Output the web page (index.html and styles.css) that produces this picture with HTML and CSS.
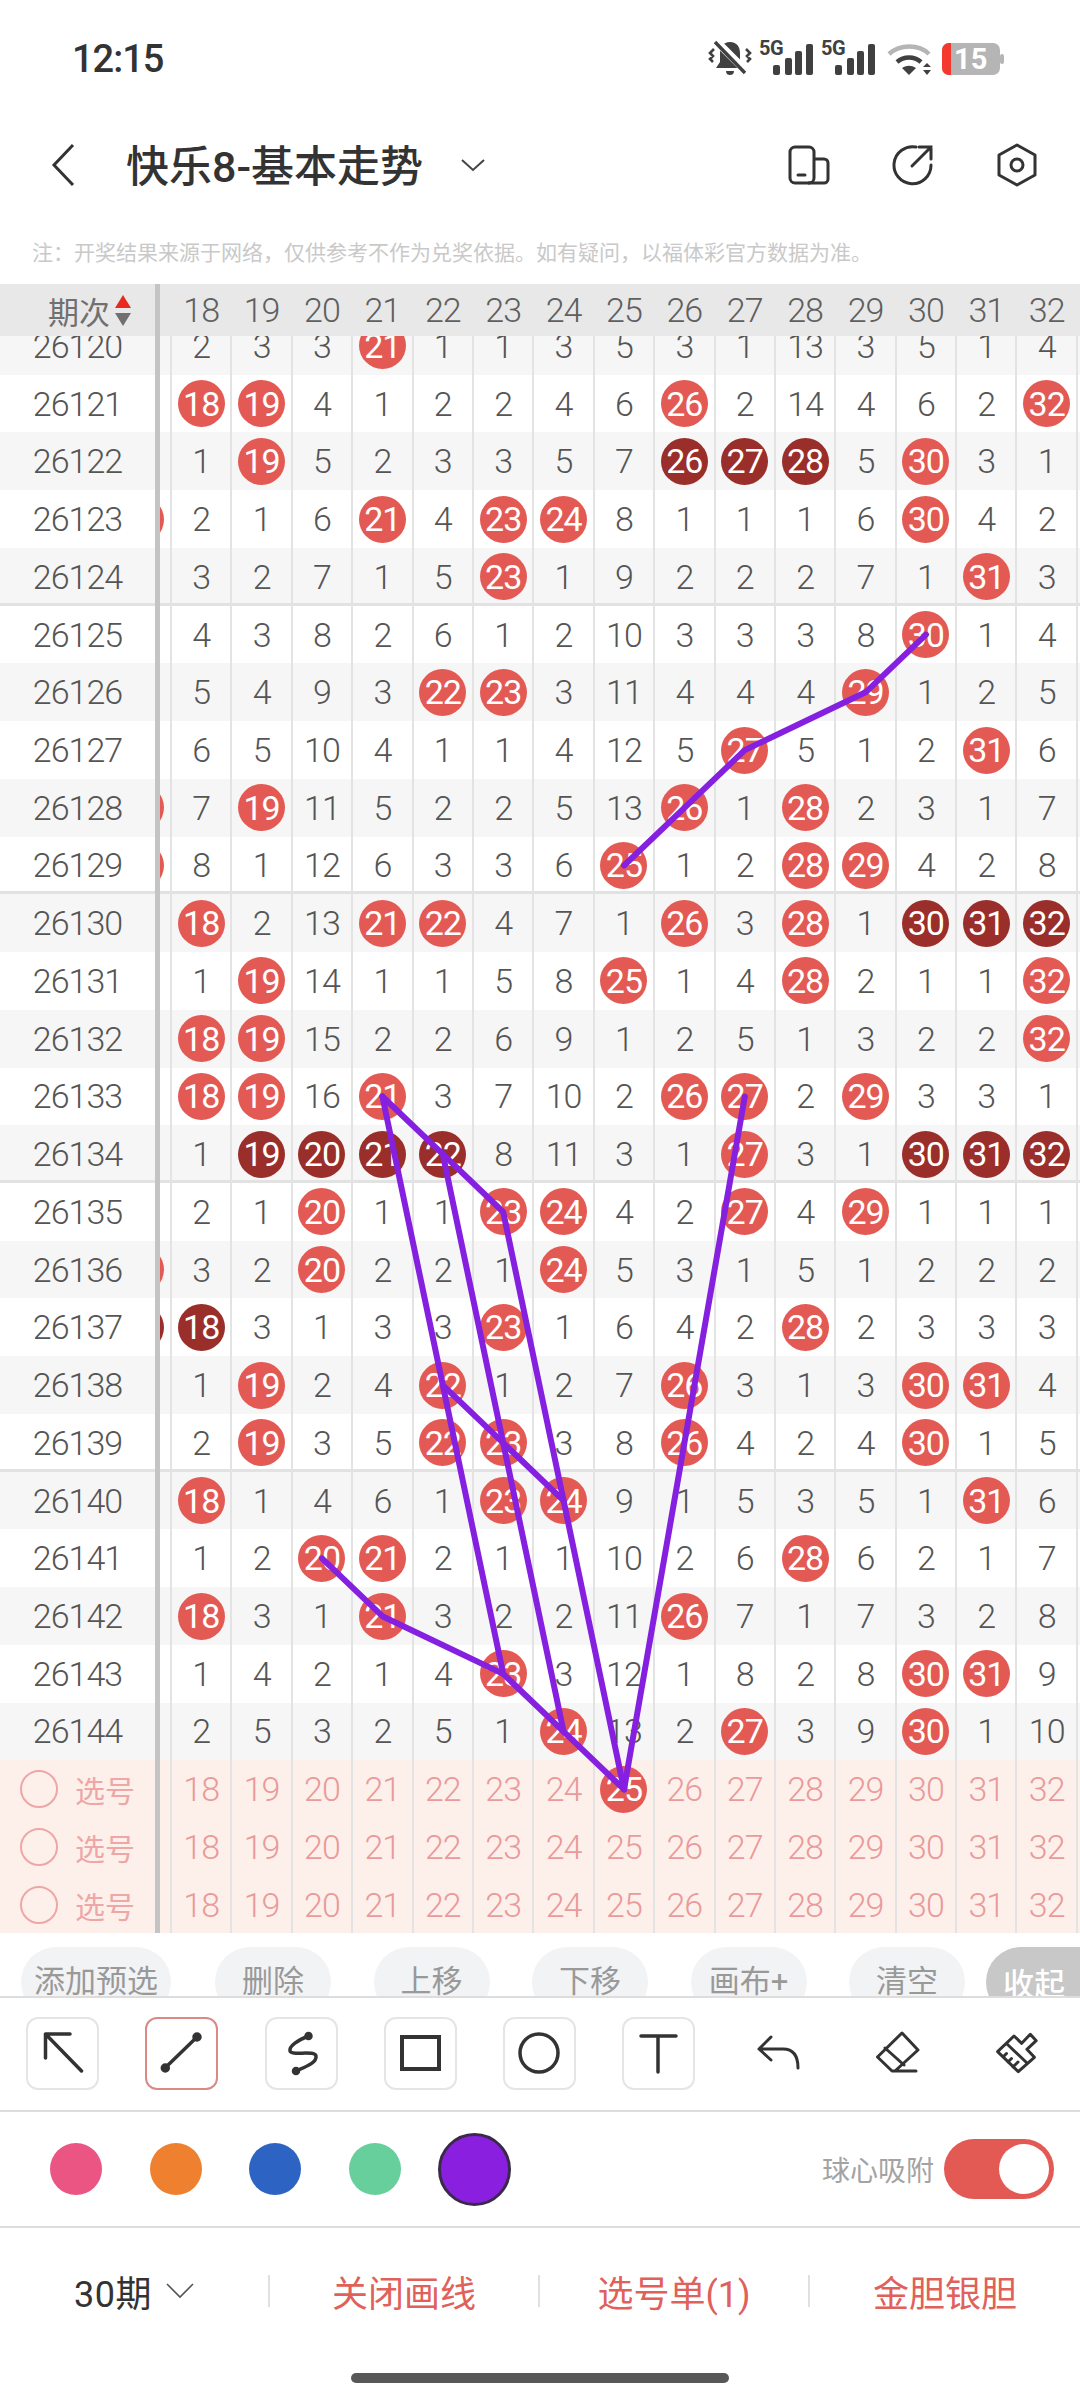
FILE: index.html
```html
<!DOCTYPE html>
<html lang="zh-CN">
<head>
    <meta charset="UTF-8">
    <meta name="viewport" content="width=device-width, initial-scale=1.0">
    <title>快乐8-基本走势</title>
    <link rel="stylesheet" href="styles.css">
</head>
<body>
    <!-- Status bar -->
    <div class="status-bar">
        <span class="status-time">12:15</span>
        <svg class="status-icons" width="300" height="44" viewBox="705 34 300 44">
            <g fill="#404040">
                <path d="M728 40c-7 0-10 5-10 11v9l-4 6h28l-4-6v-9c0-6-3-11-10-11zM724 69h8c0 3-2 4-4 4s-4-1-4-4z"/>
                <path d="M712 47l-4 4 3 3-3 3 3 3M744 47l4 4-3 3 3 3-3 3" fill="none" stroke="#404040" stroke-width="2.6"/>
            </g>
            <path d="M713 38l33 33" stroke="#fff" stroke-width="8"/>
            <path d="M713 40l30 31" stroke="#404040" stroke-width="3.4"/>
            <text class="status-net" x="757" y="53">5G</text>
            <g fill="#404040">
                <rect x="771" y="63" width="7" height="10" rx="2"/><rect x="783" y="56" width="7" height="17" rx="2"/>
                <rect x="793" y="49" width="7" height="24" rx="2"/><rect x="804" y="42" width="7" height="31" rx="2"/>
            </g>
            <text class="status-net" x="819" y="53">5G</text>
            <g fill="#404040">
                <rect x="833" y="63" width="7" height="10" rx="2"/><rect x="845" y="56" width="7" height="17" rx="2"/>
                <rect x="855" y="49" width="7" height="24" rx="2"/><rect x="866" y="42" width="7" height="31" rx="2"/>
            </g>
            <path d="M887 52c11-10 30-10 40 0" fill="none" stroke="#b5b5b5" stroke-width="4.5"/>
            <path d="M895 60c7-6 17-6 24 0" fill="none" stroke="#404040" stroke-width="4.5"/>
            <path d="M900 66c5-3 9-3 14 0l-7 7z" fill="#404040"/>
            <path d="M921 65l4-4 4 4zM921 68h8l-4 5z" fill="#404040"/>
            <rect x="940" y="41" width="58" height="32" rx="7" fill="#b5b5b5"/>
            <rect x="998" y="52" width="4" height="10" rx="2" fill="#b5b5b5"/>
            <path d="M947 41h2v32h-2a7 7 0 0 1-7-7V48a7 7 0 0 1 7-7z" fill="#f5382e"/>
            <text class="status-level" x="952" y="67">15</text>
        </svg>
    </div>

    <!-- Title bar -->
    <div class="title-bar">
        <svg class="back-icon" width="24" height="44" viewBox="0 0 24 44"><path d="M22 2L3 22l19 20" fill="none" stroke="#333" stroke-width="3"/></svg>
        <span class="title-text">快乐8-基本走势</span>
        <svg class="title-caret" width="26" height="14" viewBox="0 0 26 14"><path d="M2 2l11 10L24 2" fill="none" stroke="#444" stroke-width="2"/></svg>
        <div class="title-actions">
            <svg width="42" height="40" viewBox="0 0 42 40" fill="none" stroke="#333" stroke-width="3">
                <rect x="2" y="2" width="24" height="36" rx="5"/>
                <path d="M26 14h10a4 4 0 0 1 4 4v16a4 4 0 0 1-4 4H20"/>
                <path d="M10 30h7" stroke-linecap="round"/>
            </svg>
            <svg width="42" height="42" viewBox="0 0 42 42" fill="none" stroke="#333" stroke-width="3" stroke-linecap="round">
                <path d="M24 3A18.5 18.5 0 1 0 39 21"/>
                <path d="M27 3h12v12M39 3L20 22"/>
            </svg>
            <svg width="42" height="44" viewBox="0 0 42 44" fill="none" stroke="#333" stroke-width="3" stroke-linejoin="round">
                <path d="M21 2l18 10v20L21 42 3 32V12z"/>
                <circle cx="21" cy="22" r="6"/>
            </svg>
        </div>
    </div>

    <p class="note">注：开奖结果来源于网络，仅供参考不作为兑奖依据。如有疑问，以福体彩官方数据为准。</p>

    <!-- Trend table, filled in by app.js -->
    <div class="trend" id="trend">
        <div class="trend-row trend-head" id="trendHead"></div>
        <div class="trend-body" id="trendBody"></div>
        <svg class="draw-layer" id="drawLayer" width="1080" height="1649"></svg>
    </div>

    <!-- Action pills, cut off by the panel below -->
    <div class="pill-bar">
        <span class="pill pill-wide">添加预选</span>
        <span class="pill">删除</span>
        <span class="pill">上移</span>
        <span class="pill">下移</span>
        <span class="pill">画布+</span>
        <span class="pill">清空</span>
        <span class="pill pill-fold">收起</span>
    </div>

    <!-- Drawing tools -->
    <div class="tool-bar">
        <div class="tool tool-box">
            <svg width="73" height="73" viewBox="0 0 73 73" class="tool-icon"><path d="M19.5 41V17H44M19.5 17l36 37"/></svg>
        </div>
        <div class="tool tool-box tool-active">
            <svg width="73" height="73" viewBox="0 0 73 73" class="tool-icon"><path d="M20 51l32-31"/><circle class="dot" cx="20.3" cy="51" r="3"/><circle class="dot" cx="52" cy="20" r="3"/></svg>
        </div>
        <div class="tool tool-box">
            <svg width="73" height="73" viewBox="0 0 73 73" class="tool-icon"><path d="M43.5 19C33 23 24 29 25 34c1 5 25-1 26 5 1 7-11 11-20 15"/><circle class="dot" cx="43.5" cy="19" r="2.5"/><circle class="dot" cx="31" cy="54" r="2.5"/></svg>
        </div>
        <div class="tool tool-box">
            <svg width="73" height="73" viewBox="0 0 73 73" class="tool-icon tool-icon-square"><rect x="18" y="20" width="37" height="32"/></svg>
        </div>
        <div class="tool tool-box">
            <svg width="73" height="73" viewBox="0 0 73 73" class="tool-icon"><circle cx="36" cy="36" r="19"/></svg>
        </div>
        <div class="tool tool-box">
            <svg width="73" height="73" viewBox="0 0 73 73" class="tool-icon"><path d="M19 19h35M36 19v36"/></svg>
        </div>
        <div class="tool">
            <svg width="73" height="73" viewBox="0 0 73 73" class="tool-icon tool-icon-thin"><path d="M29 20L17 32l12 11M17 32h24c10 0 15 6 15 19"/></svg>
        </div>
        <div class="tool">
            <svg width="73" height="73" viewBox="0 0 73 73" class="tool-icon tool-icon-thin"><path d="M41 16l16 17-23 21-3 0-14.500-14zM24 31l19 17M32 54h23"/></svg>
        </div>
        <div class="tool">
            <svg width="73" height="73" viewBox="0 0 73 73" class="tool-icon tool-icon-thin"><path d="M17.600 34.700L34 19l7.700 7.300 8.600-9 5.900 6.400-9.300 8.600 7.500 8-16.100 14.400zM27 27l20 19M23 40l3.500-3.500M28 45l3.500-3.500M33 50l5-5"/></svg>
        </div>
    </div>

    <!-- Colours and snap toggle -->
    <div class="color-bar">
        <div class="swatch-slot"><span class="swatch swatch-pink"></span></div>
        <div class="swatch-slot"><span class="swatch swatch-orange"></span></div>
        <div class="swatch-slot"><span class="swatch swatch-blue"></span></div>
        <div class="swatch-slot"><span class="swatch swatch-green"></span></div>
        <div class="swatch-slot"><span class="swatch swatch-purple"></span></div>
        <span class="snap-label">球心吸附</span>
        <span class="switch"><span class="switch-knob"></span></span>
    </div>

    <!-- Bottom actions -->
    <div class="bottom-bar">
        <div class="bottom-item bottom-period">30期
            <svg width="28" height="16" viewBox="0 0 28 16"><path d="M1 1l13 13L27 1" fill="none" stroke="#555" stroke-width="1.600"/></svg>
        </div>
        <div class="bottom-item bottom-red">关闭画线</div>
        <div class="bottom-item bottom-red">选号单(1)</div>
        <div class="bottom-item bottom-red">金胆银胆</div>
    </div>
    <div class="home-bar"><span class="home-indicator"></span></div>

    <script src="app.js"></script>
</body>
</html>
```

FILE: styles.css
```css
html, body {
    margin: 0;
    padding: 0;
}

body {
    width: 1080px;
    height: 2400px;
    overflow: hidden;
    background: #fff;
    color: #333;
    font-family: Roboto, "Noto Sans CJK SC", sans-serif;
}

/* Status bar */
.status-bar {
    height: 116px;
    display: flex;
    justify-content: space-between;
    align-items: center;
    padding: 0 75px 0 72px;
    box-sizing: border-box;
}

.status-time {
    font-size: 38px;
    font-weight: 500;
    letter-spacing: -1px;
    margin-top: 2px;
}

.status-icons {
    margin-right: -2px;
}

.status-net {
    font-size: 20px;
    font-weight: 700;
    letter-spacing: -0.5px;
    fill: #404040;
}

.status-level {
    font-size: 29px;
    font-weight: 700;
    fill: #fff;
}

/* Title bar */
.title-bar {
    height: 98px;
    display: flex;
    align-items: center;
    padding-left: 51px;
}

.title-text {
    margin: 0 0 5px 51px;
    font-size: 43px;
    font-weight: 500;
    white-space: nowrap;
}

.title-caret {
    margin-left: 37px;
    margin-bottom: 1px;
}

.title-actions {
    margin-left: auto;
    padding-right: 42px;
    display: flex;
    align-items: center;
    gap: 62px;
}

.note {
    height: 70px;
    margin: 0;
    padding: 23px 0 0 32px;
    box-sizing: border-box;
    font-size: 21px;
    line-height: 32px;
    color: #c9c9c9;
    white-space: nowrap;
}

/* Trend table */
.trend {
    position: relative;
    height: 1649px;
    overflow: hidden;
}

.trend-row {
    display: grid;
    grid-template-columns: 160px 12px repeat(15, 60.4px);
    height: 57.74px;
    box-sizing: border-box;
    font-size: 34px;
    font-weight: 300;
    color: #555;
    letter-spacing: -1px;
}

.trend-body {
    height: 1597px;
    overflow: hidden;
}

.trend-inner {
    margin-top: -19px;
}

.row-even {
    background: #f6f6f6;
}

.row-odd {
    background: #fff;
}

.row-group-end {
    box-shadow: inset 0 -3px 0 #e2e2e2;
}

.row-pick {
    background: #fdf0eb;
    color: #ea9a9a;
}

.trend-head {
    height: 52px;
    background: #e8e8e8;
    color: #5f5f5f;
}

.period {
    display: flex;
    align-items: center;
    justify-content: center;
    border-right: 5px solid #c4c4c4;
    box-sizing: border-box;
}

.period-head {
    justify-content: flex-end;
    gap: 5px;
    padding-right: 24px;
    font-size: 31px;
    font-weight: 400;
    letter-spacing: 0;
    color: #707070;
}

.sort-arrows {
    display: flex;
    flex-direction: column;
    gap: 5px;
}

.sort-up, .sort-down {
    width: 0;
    height: 0;
    border-left: 8px solid transparent;
    border-right: 8px solid transparent;
}

.sort-up {
    border-bottom: 13px solid #e8291f;
}

.sort-down {
    border-top: 13px solid #707070;
}

.period-pick {
    justify-content: flex-start;
    padding-left: 20px;
    gap: 17px;
    font-size: 30px;
    font-weight: 400;
    letter-spacing: 0;
    color: #eea6a6;
}

.pick-circle {
    width: 38px;
    height: 38px;
    border: 2.5px solid #eea6a6;
    border-radius: 50%;
    box-sizing: border-box;
}

.stub {
    display: flex;
    align-items: center;
    overflow: hidden;
    border-right: 2px solid #e3e3e3;
}

.stub .ball {
    margin-left: -43px;
    flex: none;
}

.cell {
    display: flex;
    align-items: center;
    justify-content: center;
    border-right: 2px solid #e3e3e3;
}

.trend-head .cell, .trend-head .stub {
    border-right: none;
    padding-right: 2px;
}

.ball {
    width: 47px;
    height: 47px;
    display: flex;
    align-items: center;
    justify-content: center;
    border-radius: 50%;
    background: #e35a55;
    color: #fff;
    font-weight: 400;
}

.ball-dark {
    background: #9a2e2a;
}

.draw-layer {
    position: absolute;
    left: 0;
    top: 0;
    pointer-events: none;
}

.draw-line {
    fill: none;
    stroke: #8520e0;
    stroke-width: 6px;
    stroke-linejoin: round;
    stroke-linecap: round;
}

/* Action pills */
.pill-bar {
    height: 63px;
    padding: 14px 0 0 21px;
    box-sizing: border-box;
    display: flex;
    gap: 42.5px;
    overflow: hidden;
}

.pill {
    flex: none;
    width: 116px;
    height: 70px;
    border-radius: 35px;
    background: #f2f3f5;
    color: #999;
    font-size: 31px;
    line-height: 70px;
    text-align: center;
}

.pill-wide {
    width: 150px;
    margin-right: 1.5px;
}

.pill-fold {
    width: 96px;
    margin-left: -21.5px;
    border-radius: 35px 0 0 35px;
    background: #c8c8c8;
    color: #fff;
    font-weight: 500;
    line-height: 75px;
}

/* Drawing tools */
.tool-bar {
    height: 116px;
    box-sizing: border-box;
    padding: 19px 0 0 26px;
    display: flex;
    gap: 46.3px;
    border-top: 2px solid #ddd;
    border-bottom: 2px solid #ddd;
}

.tool {
    flex: none;
    width: 73px;
    height: 73px;
    box-sizing: border-box;
    position: relative;
}

.tool-box {
    border: 2px solid #e5e5e5;
    border-radius: 12px;
}

.tool-active {
    border-color: #d98a85;
}

.tool-box .tool-icon {
    margin: -2px;
}

.tool-icon {
    display: block;
    fill: none;
    stroke: #333;
    stroke-width: 3.5px;
    stroke-linecap: round;
    stroke-linejoin: round;
}

.tool-icon-square {
    stroke-width: 4px;
    stroke-linejoin: miter;
}

.tool-icon-thin {
    stroke-width: 3px;
}

.tool-icon .dot {
    fill: #333;
}

/* Colours */
.color-bar {
    height: 114px;
    display: flex;
    align-items: center;
    padding: 0 26px 0 26px;
    border-bottom: 2px solid #ddd;
}

.swatch-slot {
    width: 99.7px;
    display: flex;
    justify-content: center;
}

.swatch {
    width: 52px;
    height: 52px;
    border-radius: 50%;
}

.swatch-pink { background: #ea5583; }
.swatch-orange { background: #ee8030; }
.swatch-blue { background: #2d64c4; }
.swatch-green { background: #66cf9b; }

.swatch-purple {
    width: 73px;
    height: 73px;
    box-sizing: border-box;
    background: #8a1fe0;
    border: 3px solid #3a2a4a;
}

.snap-label {
    margin-left: auto;
    margin-right: 10px;
    font-size: 28px;
    color: #a3a3a3;
}

.switch {
    width: 110px;
    height: 60px;
    display: flex;
    justify-content: flex-end;
    align-items: center;
    padding-right: 5px;
    box-sizing: border-box;
    border-radius: 30px;
    background: #e35a55;
}

.switch-knob {
    width: 50px;
    height: 50px;
    border-radius: 50%;
    background: #fff;
}

/* Bottom actions */
.bottom-bar {
    height: 126px;
    display: grid;
    grid-template-columns: repeat(4, 270px);
    align-items: center;
}

.bottom-item {
    height: 32px;
    display: flex;
    align-items: center;
    justify-content: center;
    gap: 14px;
    font-size: 36px;
    border-right: 2px solid #e0e0e0;
}

.bottom-item:last-child {
    border-right: none;
}

.bottom-period {
    color: #333;
    justify-content: flex-start;
    padding-left: 74px;
    letter-spacing: 0.5px;
}

.bottom-red {
    color: #e0605a;
}

.home-bar {
    height: 44px;
    display: flex;
    justify-content: center;
    padding-top: 19px;
    box-sizing: border-box;
}

.home-indicator {
    width: 378px;
    height: 10px;
    border-radius: 5px;
    background: #585858;
}
```

FILE: app.js
```js
// One line per draw, "d" marks the darker ball of a run. First value of each
// row is the clipped column on the left: 0 nothing, 1 ball, 2 dark ball.
const firstPeriod = 26120;
const firstCol = 18;
const rows = [
    "0 2 3 3 21 1 1 3 5 3 1 13 3 5 1 4",
    "0 18 19 4 1 2 2 4 6 26 2 14 4 6 2 32",
    "0 1 19 5 2 3 3 5 7 d26 d27 d28 5 30 3 1",
    "1 2 1 6 21 4 23 24 8 1 1 1 6 30 4 2",
    "0 3 2 7 1 5 23 1 9 2 2 2 7 1 31 3",
    "0 4 3 8 2 6 1 2 10 3 3 3 8 30 1 4",
    "0 5 4 9 3 22 23 3 11 4 4 4 29 1 2 5",
    "0 6 5 10 4 1 1 4 12 5 27 5 1 2 31 6",
    "1 7 19 11 5 2 2 5 13 26 1 28 2 3 1 7",
    "1 8 1 12 6 3 3 6 25 1 2 28 29 4 2 8",
    "0 18 2 13 21 22 4 7 1 26 3 28 1 d30 d31 d32",
    "0 1 19 14 1 1 5 8 25 1 4 28 2 1 1 32",
    "0 18 19 15 2 2 6 9 1 2 5 1 3 2 2 32",
    "0 18 19 16 21 3 7 10 2 26 27 2 29 3 3 1",
    "0 1 d19 d20 d21 d22 8 11 3 1 27 3 1 d30 d31 d32",
    "0 2 1 20 1 1 23 24 4 2 27 4 29 1 1 1",
    "1 3 2 20 2 2 1 24 5 3 1 5 1 2 2 2",
    "2 d18 3 1 3 3 23 1 6 4 2 28 2 3 3 3",
    "0 1 19 2 4 22 1 2 7 26 3 1 3 30 31 4",
    "0 2 19 3 5 22 23 3 8 26 4 2 4 30 1 5",
    "0 18 1 4 6 1 23 24 9 1 5 3 5 1 31 6",
    "0 1 2 20 21 2 1 1 10 2 6 28 6 2 1 7",
    "0 18 3 1 21 3 2 2 11 26 7 1 7 3 2 8",
    "0 1 4 2 1 4 23 3 12 1 8 2 8 30 31 9",
    "0 2 5 3 2 5 1 24 13 2 27 3 9 30 1 10"
];

// The purple lines the user drew, as [column, period] points
const drawnLines = [
    [[30, 26125], [29, 26126], [27, 26127], [26, 26128], [25, 26129]],
    [[20, 26141], [21, 26142], [23, 26143], [24, 26144], [25, 26145]],
    [[21, 26133], [22, 26134], [23, 26135], [24, 26140], [25, 26145]],
    [[21, 26133], [22, 26138], [23, 26143]],
    [[22, 26138], [23, 26139], [24, 26140]],
    [[22, 26134], [23, 26139], [24, 26144]],
    [[27, 26133], [25, 26145]]
];

function ballHtml(text, dark) {
    return `<span class="ball${dark ? " ball-dark" : ""}">${text}</span>`;
}

function cellHtml(value, col) {
    const dark = value[0] === "d";
    const num = dark ? value.slice(1) : value;
    const isBall = Number(num) === col;
    return `<div class="cell">${isBall ? ballHtml(num, dark) : num}</div>`;
}

function headHtml() {
    let html = `<div class="period period-head">期次<span class="sort-arrows"><span class="sort-up"></span><span class="sort-down"></span></span></div><div class="stub"></div>`;
    for (let i = 0; i < 15; i++) {
        html += `<div class="cell">${firstCol + i}</div>`;
    }
    return html;
}

function rowHtml(line, index) {
    const values = line.split(" ");
    const period = firstPeriod + index;
    let classes = "trend-row " + (period % 2 === 0 ? "row-even" : "row-odd");
    if (period % 5 === 4 && index < rows.length - 1) classes += " row-group-end";

    let html = `<div class="${classes}"><div class="period">${period}</div><div class="stub">`;
    if (values[0] !== "0") html += ballHtml("17", values[0] === "2");
    html += "</div>";
    values.slice(1).forEach((value, i) => {
        html += cellHtml(value, firstCol + i);
    });
    return html + "</div>";
}

function pickHtml(hit) {
    let html = `<div class="trend-row row-pick"><div class="period period-pick"><span class="pick-circle"></span>选号</div><div class="stub"></div>`;
    for (let i = 0; i < 15; i++) {
        const num = firstCol + i;
        html += `<div class="cell">${num === hit ? ballHtml(num) : num}</div>`;
    }
    return html + "</div>";
}

function linePoints(points) {
    return points.map(([col, period]) => {
        const x = 172 + 29.2 + (col - firstCol) * 60.4;
        const y = 33 + (period - firstPeriod + 0.5) * 57.74;
        return `${x.toFixed(1)},${y.toFixed(1)}`;
    }).join(" ");
}

document.getElementById("trendHead").innerHTML = headHtml();
document.getElementById("trendBody").innerHTML =
    `<div class="trend-inner">${rows.map(rowHtml).join("")}${pickHtml(25)}${pickHtml(0)}${pickHtml(0)}</div>`;
document.getElementById("drawLayer").innerHTML = drawnLines
    .map((points) => `<polyline class="draw-line" points="${linePoints(points)}"></polyline>`)
    .join("");
```
